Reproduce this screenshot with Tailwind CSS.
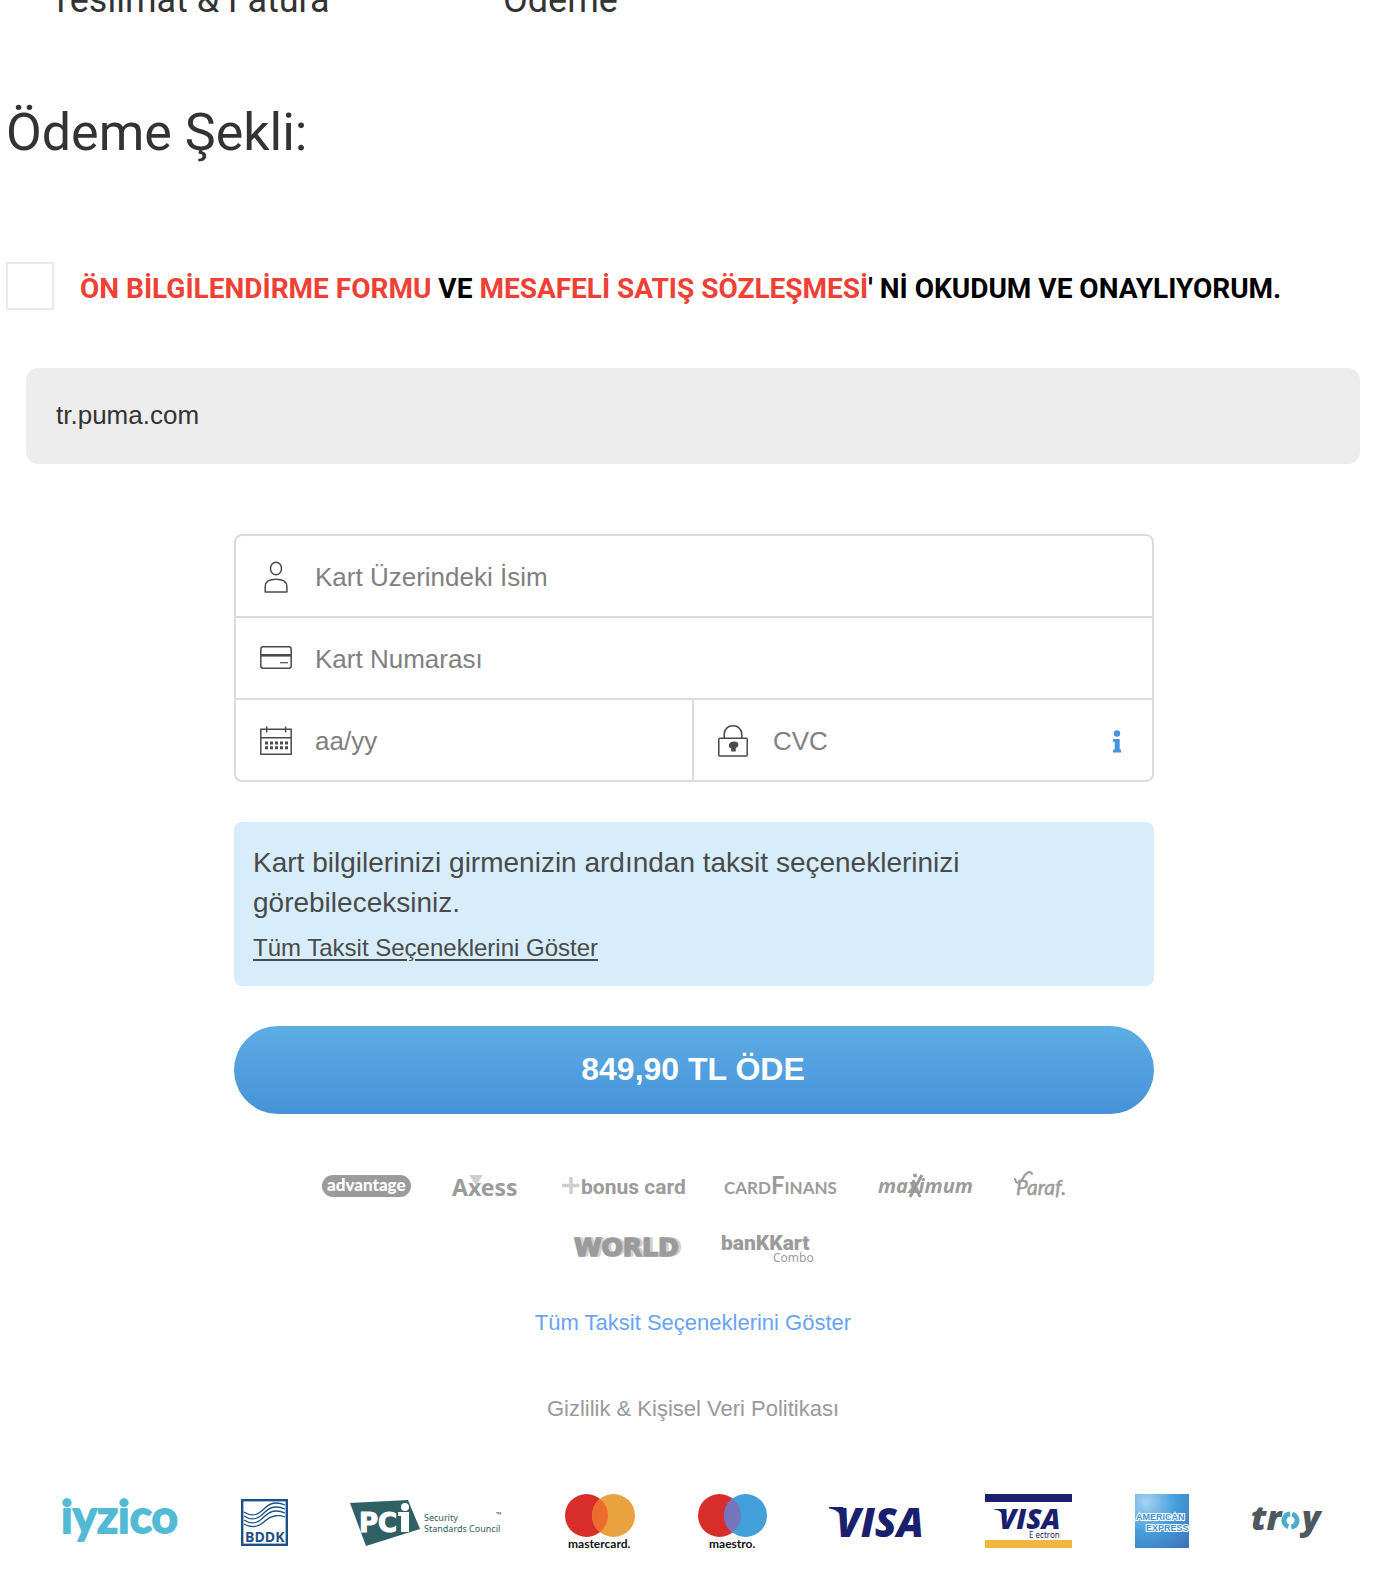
<!DOCTYPE html>
<html lang="tr">
<head>
<meta charset="utf-8">
<meta name="viewport" content="width=device-width, initial-scale=1">
<title>Ödeme</title>
<script src="https://cdn.jsdelivr.net/npm/@tailwindcss/browser@4"></script>
</head>
<body class="bg-white font-['Liberation_Sans',sans-serif] text-[#333]">

<!-- Checkout steps -->
<nav class="flex h-[18px] items-end overflow-hidden pl-[50px] font-['Roboto',sans-serif] text-4xl leading-9">
  <a href="#teslimat" class="w-[453px]">Teslimat &amp; Fatura</a>
  <a href="#odeme">Ödeme</a>
</nav>

<main>
  <h1 class="mt-[79px] pl-1.5 font-['Roboto',sans-serif] text-[52px] leading-[72px]">Ödeme Şekli:</h1>

  <div class="mt-[93px] flex items-center gap-[26px] pl-1.5">
    <input id="onay" type="checkbox" class="size-12 shrink-0 appearance-none border-2 border-[#e9e9e9] bg-white">
    <label for="onay" class="pt-1.5 font-['Roboto',sans-serif] text-[28px] leading-10 font-bold text-black"><a href="#form" class="text-[#ee4035]">ÖN BİLGİLENDİRME FORMU</a> VE <a href="#sozlesme" class="text-[#ee4035]">MESAFELİ SATIŞ SÖZLEŞMESİ</a>' Nİ OKUDUM VE ONAYLIYORUM.</label>
  </div>

  <div class="mt-[58px] mr-6 ml-[26px] rounded-xl bg-[#ededed] px-[30px] pt-[27px] pb-[29px] text-[26px] leading-10">tr.puma.com</div>

  <div class="pr-6 pl-7">
    <form class="mx-auto mt-[70px] max-w-[920px]">
      <div class="divide-y-2 divide-[#dcdcdc] rounded-lg border-2 border-[#dcdcdc]">
        <div class="flex h-[82px] items-center px-6 pt-0.5">
          <svg class="h-8 w-8 shrink-0" viewBox="0 0 32 32" fill="none" stroke="#4a4a4a" stroke-width="1.500" stroke-linejoin="round"><ellipse cx="16" cy="7.500" rx="5.500" ry="6.300"/><path d="M5.200 31V25.500C5.200 20 9 18.300 16 18.300S26.900 20 26.900 25.500V31Z"/></svg>
          <input type="text" aria-label="Kart Üzerindeki İsim" placeholder="Kart Üzerindeki İsim" class="ml-[23px] h-10 min-w-0 flex-1 text-[26px] outline-none placeholder:text-[#808080]">
        </div>
        <div class="flex h-[82px] items-center px-6 pt-0.5">
          <svg class="h-8 w-8 shrink-0" viewBox="0 0 32 32" fill="none" stroke="#4a4a4a" stroke-width="1.500"><rect x=".8" y="3.800" width="30.400" height="21.400" rx="2.500"/><path d="M1 12.300H31" stroke-width="2.600"/><path d="M20 19.700H28" stroke-width="1.200"/></svg>
          <input type="text" aria-label="Kart Numarası" placeholder="Kart Numarası" class="ml-[23px] h-10 min-w-0 flex-1 text-[26px] outline-none placeholder:text-[#808080]">
        </div>
        <div class="grid h-20 grid-cols-2 divide-x-2 divide-[#dcdcdc]">
          <div class="flex items-center px-6 pt-0.5">
            <svg class="h-8 w-8 shrink-0" viewBox="0 0 32 32" fill="none" stroke="#4a4a4a" stroke-width="1.500"><path d="M.8 4.300H31.200V29.200H.8ZM.8 12.800H31.200M6.700 1.500V7.500M25.600 1.500V7.500"/><path d="M5 18H28M5 22.700H28" stroke-width="3" stroke-dasharray="3 2"/></svg>
            <input type="text" aria-label="Son kullanma tarihi" placeholder="aa/yy" class="ml-[23px] h-10 min-w-0 flex-1 text-[26px] outline-none placeholder:text-[#808080]">
          </div>
          <div class="flex items-center pt-0.5 pr-[31px] pl-6">
            <svg class="h-8 w-8 shrink-0" viewBox="0 0 32 32" fill="none" stroke="#4a4a4a" stroke-width="1.500"><rect x=".8" y="13.300" width="28.400" height="17.800" rx="1"/><path d="M6.200 13V9.500C6.200 4 10 .8 15 .8S23.800 4 23.800 9.500V13"/><path d="M11.500 18.500C12.500 16.600 17 15.800 19.500 17.500C21.500 20 19.500 22.500 17.700 23.200V26.600H13.200V23.600C11 23 10.300 20.400 11.500 18.500Z" fill="#4a4a4a" stroke="none"/></svg>
            <input type="text" aria-label="CVC" placeholder="CVC" class="ml-[23px] h-10 min-w-0 flex-1 text-[26px] outline-none placeholder:text-[#808080]">
            <button type="button" aria-label="CVC bilgisi"><svg class="h-6 w-2" viewBox="0 0 8 24" fill="#4a90e2"><circle cx="4" cy="4.500" r="3.200"/><path d="M0 10H6.700V20.500H8V23.500H0V20.500H1.700V12.800H0Z"/></svg></button>
          </div>
        </div>
      </div>

      <div class="mt-10 rounded-lg bg-[#d7edfc] px-[19px] pt-[21px] pb-[18px] text-[#4a4a4a]">
        <p class="text-[28px] leading-10">Kart bilgilerinizi girmenizin ardından taksit seçeneklerinizi görebileceksiniz.</p>
        <a href="#taksit" class="mt-[5px] block text-2xl leading-10 underline decoration-2 underline-offset-3">Tüm Taksit Seçeneklerini Göster</a>
      </div>

      <button type="submit" class="mt-10 block h-[88px] w-full rounded-full bg-linear-to-b from-[#5dade5] to-[#4692d8] pr-0.5 pb-0.5 text-[32px] font-bold text-white">849,90 TL ÖDE</button>
    </form>

    <!-- Card programmes -->
    <div class="mx-auto mt-14 flex max-w-[760px] flex-wrap justify-center gap-x-[41px] gap-y-[30px] pr-0.5">
      <svg class="h-8 w-[89px] overflow-visible" viewBox="0 0 89 32" role="img" aria-label="advantage"><rect y="5" width="89" height="22" rx="11" fill="#9b9b9b"/><text x="5" y="21" font-family="Lato" font-weight="900" font-size="17" fill="#fff">advantage</text></svg>
      <svg class="h-8 w-[69px] overflow-visible" viewBox="0 0 69 32" role="img" aria-label="Axess"><text x="0" y="26" font-family="Noto Sans" font-weight="700" font-size="23" fill="#9b9b9b">Axess</text><path d="M17 5H31L24 15Z" fill="#cfcfcf"/></svg>
      <svg class="h-8 w-[122px] overflow-visible" viewBox="0 0 122 32" role="img" aria-label="bonus card"><path d="M0 15.500H17.500M9 7V24" stroke="#cfcfcf" stroke-width="3.500"/><text x="19" y="24" font-family="Roboto" font-weight="700" font-size="21" fill="#9b9b9b">bonus card</text></svg>
      <svg class="h-8 w-[113px] overflow-visible" viewBox="0 0 113 32" role="img" aria-label="CardFinans" font-family="Lato" font-weight="700" fill="#9b9b9b"><text x="-1" y="24" font-size="17">CARD<tspan font-size="24">F</tspan>INANS</text></svg>
      <svg class="h-8 w-[94px] overflow-visible" viewBox="0 0 94 32" role="img" aria-label="Maximum"><text x="-1" y="23" font-family="Open Sans" font-weight="700" font-style="italic" font-size="20" fill="#9b9b9b">maximum</text><path d="M31 27L43 5M34 10L41 27" stroke="#9b9b9b" stroke-width="3"/><circle cx="36" cy="5.500" r="2" fill="#9b9b9b"/></svg>
      <svg class="h-8 w-[51px] overflow-visible" viewBox="0 0 51 32" role="img" aria-label="Paraf"><text x="2" y="25" font-family="Lato" font-style="italic" font-size="21" fill="#9b9b9b" stroke="#9b9b9b" stroke-width=".500">Paraf.</text><path d="M1 9C2 14 6 14 9 8C12 2 17 0 18 4" fill="none" stroke="#9b9b9b" stroke-width="2" stroke-linecap="round"/></svg>
      <svg class="h-8 w-[107px] overflow-visible" viewBox="0 0 107 32" role="img" aria-label="World"><text x="3" y="24" font-family="DejaVu Sans" font-weight="700" font-size="25" fill="#cfcfcf" stroke="#cfcfcf">WORLD</text><text x="0" y="24" font-family="DejaVu Sans" font-weight="700" font-size="25" fill="#9b9b9b" stroke="#9b9b9b" stroke-width="1.500">WORLD</text></svg>
      <svg class="h-8 w-[90px] overflow-visible" viewBox="0 0 90 32" role="img" aria-label="Bankkart Combo" fill="#9b9b9b"><text x="-1" y="18" font-family="Roboto" font-weight="900" font-size="21">banKKart</text><text x="51" y="30" font-family="Noto Sans" font-size="12">Combo</text></svg>
    </div>

    <div class="mt-[39px] flex flex-col items-center gap-[46px] pr-0.5 text-[22px] leading-10">
      <a href="#taksit" class="text-[#68a4f4]">Tüm Taksit Seçeneklerini Göster</a>
      <a href="#gizlilik" class="text-[#999]">Gizlilik &amp; Kişisel Veri Politikası</a>
    </div>
  </div>
</main>

<!-- Payment networks -->
<footer class="mt-[65px] flex items-start justify-between pr-[62px] pb-7 pl-16">
  <svg class="h-14 w-[114px] overflow-visible" viewBox="0 0 114 56" role="img" aria-label="iyzico"><text x="-3" y="39" font-family="Lato" font-weight="700" font-size="46" fill="#53bad5" stroke="#53bad5" stroke-width="1.800" stroke-linejoin="round">iyzico</text></svg>
  <svg class="h-14 w-[47px] overflow-visible" viewBox="0 0 47 56" role="img" aria-label="BDDK"><rect x="1.200" y="6.200" width="44.600" height="44.600" fill="#fff" stroke="#1d5088" stroke-width="2.400"/><g fill="none" stroke="#1d5088" stroke-width="1.300"><path d="M3 18C12 24 18 20 24 14S37 8 44 11"/><path d="M3 22C12 28 18 24 24 18S37 12 44 15"/><path d="M3 26C12 32 18 28 24 22S37 16 44 19"/><path d="M3 30C12 35 19 32 24 27S37 20 44 23"/></g><text x="4" y="47.500" font-family="Open Sans" font-weight="700" font-size="14" fill="#1d5088">BDDK</text></svg>
  <svg class="h-14 w-[152px] overflow-visible" viewBox="0 0 152 56" role="img" aria-label="PCI Security Standards Council" fill="#2f6063"><path d="M0 9L58 6L70 35L16 52Z"/><text x="9" y="38" font-family="DejaVu Sans" font-weight="700" font-size="26" fill="#fff" stroke="#fff">PC</text><path d="M48 18H59V38H51V22H48Z" fill="#fff"/><circle cx="55" cy="13" r="4" fill="#fff"/><g font-family="Noto Sans" font-size="9"><text x="74" y="27">Security</text><text x="74" y="38">Standards Council</text><text x="146" y="23" font-size="7">™</text></g></svg>
  <svg class="h-14 w-[70px] overflow-visible" viewBox="0 0 70 56" role="img" aria-label="Mastercard"><circle cx="21.500" cy="21.500" r="21.500" fill="#d82e2b"/><circle cx="48.500" cy="21.500" r="21.500" fill="#eaa140"/><path d="M35 4.800A21.500 21.500 0 0 1 35 38.200A21.500 21.500 0 0 1 35 4.800Z" fill="#ed6b2d"/><text x="3" y="54" font-family="Lato" font-weight="700" font-size="12" fill="#111">mastercard.</text></svg>
  <svg class="h-14 w-[69px] overflow-visible" viewBox="0 0 69 56" role="img" aria-label="Maestro"><circle cx="21.500" cy="21.500" r="21.500" fill="#d82e2b"/><circle cx="47.500" cy="21.500" r="21.500" fill="#439fd9"/><path d="M34.500 4.400A21.500 21.500 0 0 1 34.500 38.600A21.500 21.500 0 0 1 34.500 4.400Z" fill="#7675bc"/><text x="11" y="54" font-family="Lato" font-weight="700" font-size="12" fill="#111">maestro.</text></svg>
  <svg class="h-14 w-[93px] overflow-visible" viewBox="0 0 93 56" role="img" aria-label="Visa" fill="#1a1f6e"><path d="M0 13H14L18 28L12 22C9 17 5 15 0 14.500Z"/><text x="7" y="42.500" font-family="Open Sans" font-weight="800" font-style="italic" font-size="40">VISA</text></svg>
  <svg class="h-14 w-[88px] overflow-visible" viewBox="0 0 88 56" role="img" aria-label="Visa Electron" fill="#1a1f6e"><path d="M0 0H87V8H0Z"/><path d="M0 46H87V54H0Z" fill="#efb73e"/><path d="M9 15H19L22 24L18 21C16 17 13 16 9 15.500Z"/><text x="14" y="35" font-family="Open Sans" font-weight="800" font-style="italic" font-size="28">VISA</text><text x="44" y="44" font-family="Noto Sans" font-size="8">E ectron</text></svg>
  <svg class="h-14 w-[54px] overflow-visible" viewBox="0 0 54 56" role="img" aria-label="American Express"><defs><radialGradient id="amex" cx=".2" cy=".15" r="1.100"><stop offset="0" stop-color="#a6d2f3"/><stop offset=".5" stop-color="#459fdb"/><stop offset="1" stop-color="#3e74b8"/></radialGradient></defs><path d="M0 0H54V54H0Z" fill="url(#amex)"/><g font-family="Liberation Sans" font-weight="700" font-size="9" fill="#3f8fd0" stroke="#fff" stroke-width="2" paint-order="stroke"><text x="1" y="26">AMERICAN</text><text x="11" y="37">EXPRESS</text></g></svg>
  <svg class="h-14 w-[70px] overflow-visible" viewBox="0 0 70 56" role="img" aria-label="troy"><g font-family="Open Sans" font-weight="800" font-style="italic" font-size="34" fill="#50585f"><text x="-1" y="36">tr</text><text x="50" y="36">y</text></g><circle cx="38.500" cy="26.500" r="6.500" fill="none" stroke="#4aaec9" stroke-width="5" stroke-dasharray="17.400 3" transform="rotate(-75 38.500 26.500)"/></svg>
</footer>
</body>
</html>
